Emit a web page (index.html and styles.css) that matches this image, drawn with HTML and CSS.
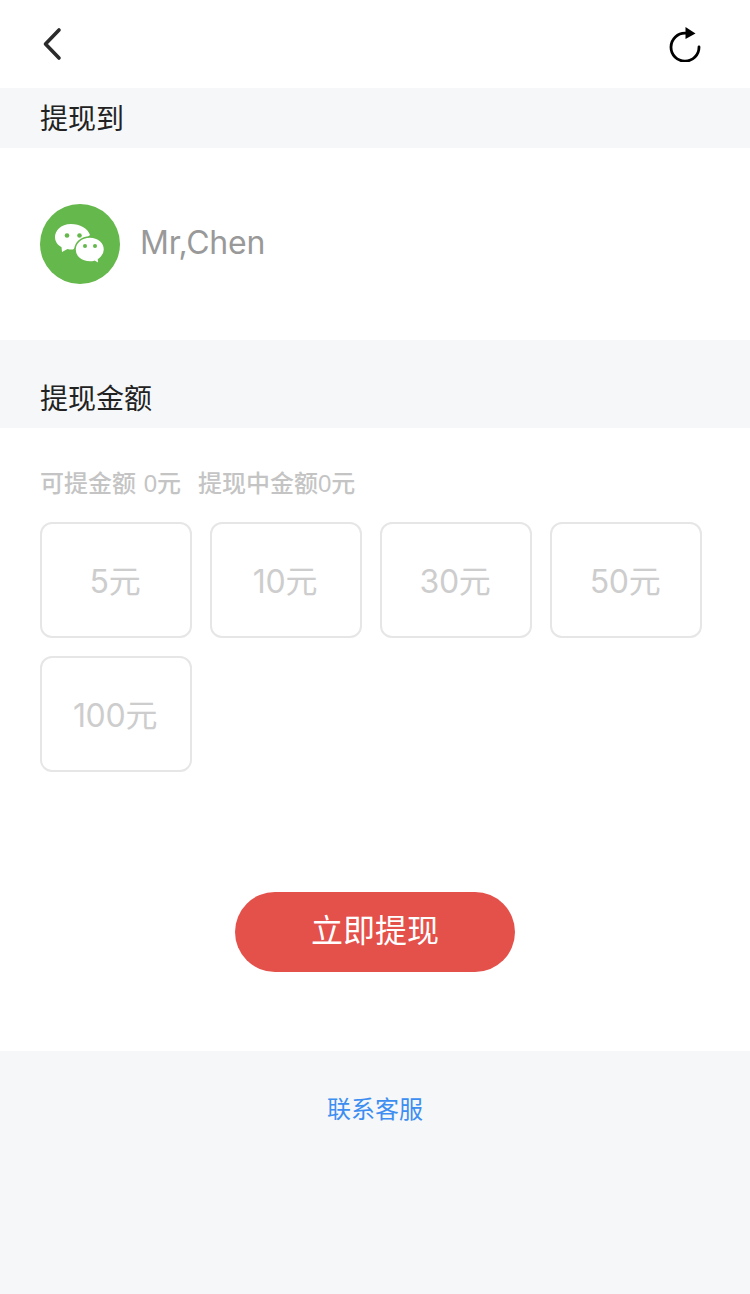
FILE: index.html
```html
<!DOCTYPE html>
<html lang="zh">
<head>
<meta charset="utf-8">
<title>提现</title>
<link rel="stylesheet" href="styles.css">
</head>
<body>
<header class="nav">
  <svg class="nav-back" width="20" height="36" viewBox="0 0 20 36"><path d="M17 4 L3.500 18 L17 32" fill="none" stroke="#2b2b2b" stroke-width="3.600" stroke-linecap="round" stroke-linejoin="round"/></svg>
  <svg class="nav-refresh" width="34" height="38" viewBox="0 0 34 38"><path d="M17.500 9.200 A14 14 0 1 0 31 23" fill="none" stroke="#000" stroke-width="2.800" stroke-linecap="round"/><path d="M17.500 3 L27.500 9.500 L17.500 15 Z" fill="#000"/></svg>
</header>
<div class="band band-target">提现到</div>
<section class="account">
  <div class="avatar">
    <svg width="80" height="80" viewBox="0 0 80 80">
      <circle cx="40" cy="40" r="40" fill="#65b84b"/>
      <path d="M31 20 C20.500 20 15 27 15 33 C15 37.500 17.500 41 21.500 43 L22 48 L27.500 45 C29.500 45.500 31 45.600 33 45.500 L50 31 C47.500 24 40 20 31 20 Z" fill="#fff"/>
      <path d="M50 33 C41 33 35 39 35 45.500 C35 52.500 41 58 50 58 C51.500 58 53 57.800 54.500 57.400 L59 60 L58.500 55.500 C62 53 64.500 49.500 64.500 45.500 C64.500 39 58.500 33 50 33 Z" fill="#fff" stroke="#65b84b" stroke-width="1.500"/>
      <circle cx="27" cy="31.500" r="2.300" fill="#65b84b"/>
      <circle cx="39.500" cy="31.500" r="2.300" fill="#65b84b"/>
      <circle cx="45" cy="42" r="2" fill="#65b84b"/>
      <circle cx="55" cy="42" r="2" fill="#65b84b"/>
    </svg>
  </div>
  <span class="account-name">Mr,Chen</span>
</section>
<div class="band band-amount">提现金额</div>
<main class="amount">
  <p class="balance"><span>可提金额 0元</span><span>提现中金额0元</span></p>
  <div class="options">
    <div class="option">5元</div>
    <div class="option">10元</div>
    <div class="option">30元</div>
    <div class="option">50元</div>
    <div class="option">100元</div>
  </div>
  <div class="submit-row"><button class="submit" type="button">立即提现</button></div>
</main>
<footer class="footer"><a class="service">联系客服</a></footer>
</body>
</html>
```
FILE: styles.css
```css
* { box-sizing: border-box; }
html, body { margin: 0; padding: 0; }
body {
  width: 750px;
  height: 1294px;
  overflow: hidden;
  background: #fff;
  font-family: "Liberation Sans", "Noto Sans CJK SC", sans-serif;
  display: flex;
  flex-direction: column;
}
.nav {
  height: 88px;
  padding: 24px 48px 0 42px;
  display: flex;
  justify-content: space-between;
  align-items: flex-start;
}
.nav-back { margin-top: 2px; }
.band {
  background: #f6f7f9;
  color: #222;
  font-size: 28px;
  padding-left: 40px;
  display: flex;
}
.band-target { height: 60px; padding-bottom: 2px; align-items: center; }
.band-amount { height: 88px; align-items: flex-end; padding-bottom: 8px; line-height: 40px; }
.account {
  height: 192px;
  padding-left: 40px;
  display: flex;
  align-items: center;
  gap: 20px;
}
.avatar { width: 80px; height: 80px; }
.avatar svg { display: block; }
.account-name {
  font-family: "Inter", "Liberation Sans", sans-serif;
  font-size: 32px;
  letter-spacing: -0.2px;
  line-height: 40px;
  margin-top: -3px;
  color: #999;
}
.amount {
  height: 623px;
  padding: 40px 40px 0;
}
.balance {
  margin: 0;
  height: 32px;
  line-height: 32px;
  font-size: 24px;
  font-weight: 500;
  color: #c4c4c4;
  word-spacing: 1px;
  display: flex;
  gap: 17px;
}
.options {
  margin-top: 22px;
  display: grid;
  grid-template-columns: repeat(4, 152px);
  grid-auto-rows: 116px;
  gap: 18px;
}
.option {
  border: 2px solid #e6e6e6;
  border-radius: 12px;
  padding: 0 2px 3px 0;
  display: flex;
  align-items: center;
  justify-content: center;
  font-family: "Inter", "Noto Sans CJK SC", sans-serif;
  font-size: 32px;
  letter-spacing: -0.3px;
  color: #cdcdcd;
}
.submit-row { margin-top: 120px; display: flex; justify-content: center; }
.submit {
  width: 280px;
  height: 80px;
  border: 0;
  border-radius: 40px;
  padding: 0 0 8px;
  background: #e4504a;
  color: #fff;
  font-family: inherit;
  font-size: 32px;
}
.footer {
  flex: 1;
  background: #f6f7f9;
  padding-top: 41px;
  text-align: center;
}
.service { font-size: 24px; line-height: 36px; color: #3d8ef0; }
```
